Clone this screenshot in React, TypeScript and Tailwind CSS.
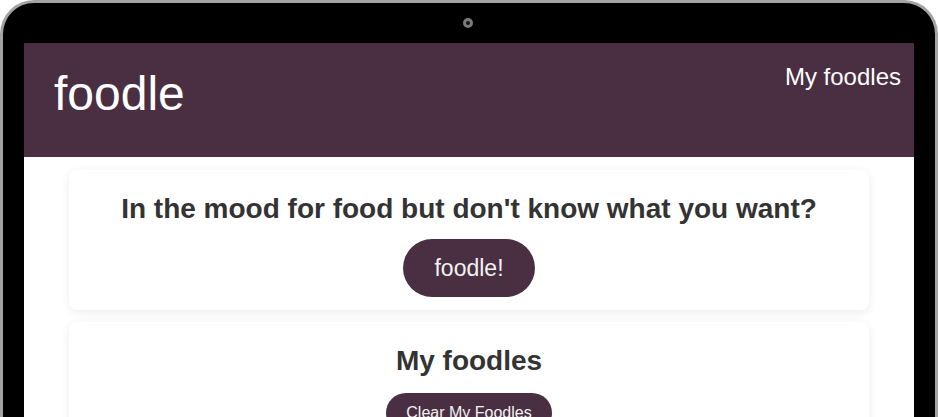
import React from 'react';

const App: React.FC = () => {
  return (
    <div className="w-[938px] h-[417px] overflow-hidden bg-white" style={{ fontFamily: '"Liberation Sans", Arial, sans-serif' }}>
      <div className="relative h-[440px] rounded-t-[34px] border-[3px] border-b-0 border-[#a3a3a3] bg-black px-[21px] pt-[40px]">
        {/* camera */}
        <div className="absolute left-[460px] top-[15px] flex h-[10px] w-[10px] items-center justify-center rounded-full bg-[#7a7a7a]">
          <div className="h-[4px] w-[4px] rounded-full bg-[#161616]" />
        </div>

        <div className="h-full bg-white">
          <header className="flex h-[114px] items-start justify-between bg-[#4a2f42] pl-[30px] pr-[13px] text-white">
            <h1 className="mt-[23px] text-[48px] leading-[55px]">foodle</h1>
            <a className="mt-[20px] text-[24px] leading-[28px]">My foodles</a>
          </header>

          <main className="mx-auto flex w-[800px] flex-col gap-[12px] pt-[13px]">
            <section className="flex flex-col items-center rounded-lg bg-white px-4 pt-[23px] pb-[13px] shadow-[0_2px_10px_rgba(0,0,0,0.08)]">
              <h2 className="text-[28px] font-bold leading-[32px] text-[#333]">
                In the mood for food but don't know what you want?
              </h2>
              <button className="mt-[14px] h-[58px] rounded-full bg-[#4a2f42] px-[31px] text-[23px] text-[#f2f2f2]">
                foodle!
              </button>
            </section>

            <section className="flex flex-col items-center rounded-lg bg-white px-4 pt-[23px] pb-[16px] shadow-[0_2px_10px_rgba(0,0,0,0.08)]">
              <h2 className="text-[28px] font-bold leading-[32px] text-[#333]">My foodles</h2>
              <button className="mt-[16px] h-[40px] rounded-full bg-[#4a2f42] px-[20px] text-[16px] text-[#f2f2f2]">
                Clear My Foodles
              </button>
            </section>
          </main>
        </div>
      </div>
    </div>
  );
};

export default App;
